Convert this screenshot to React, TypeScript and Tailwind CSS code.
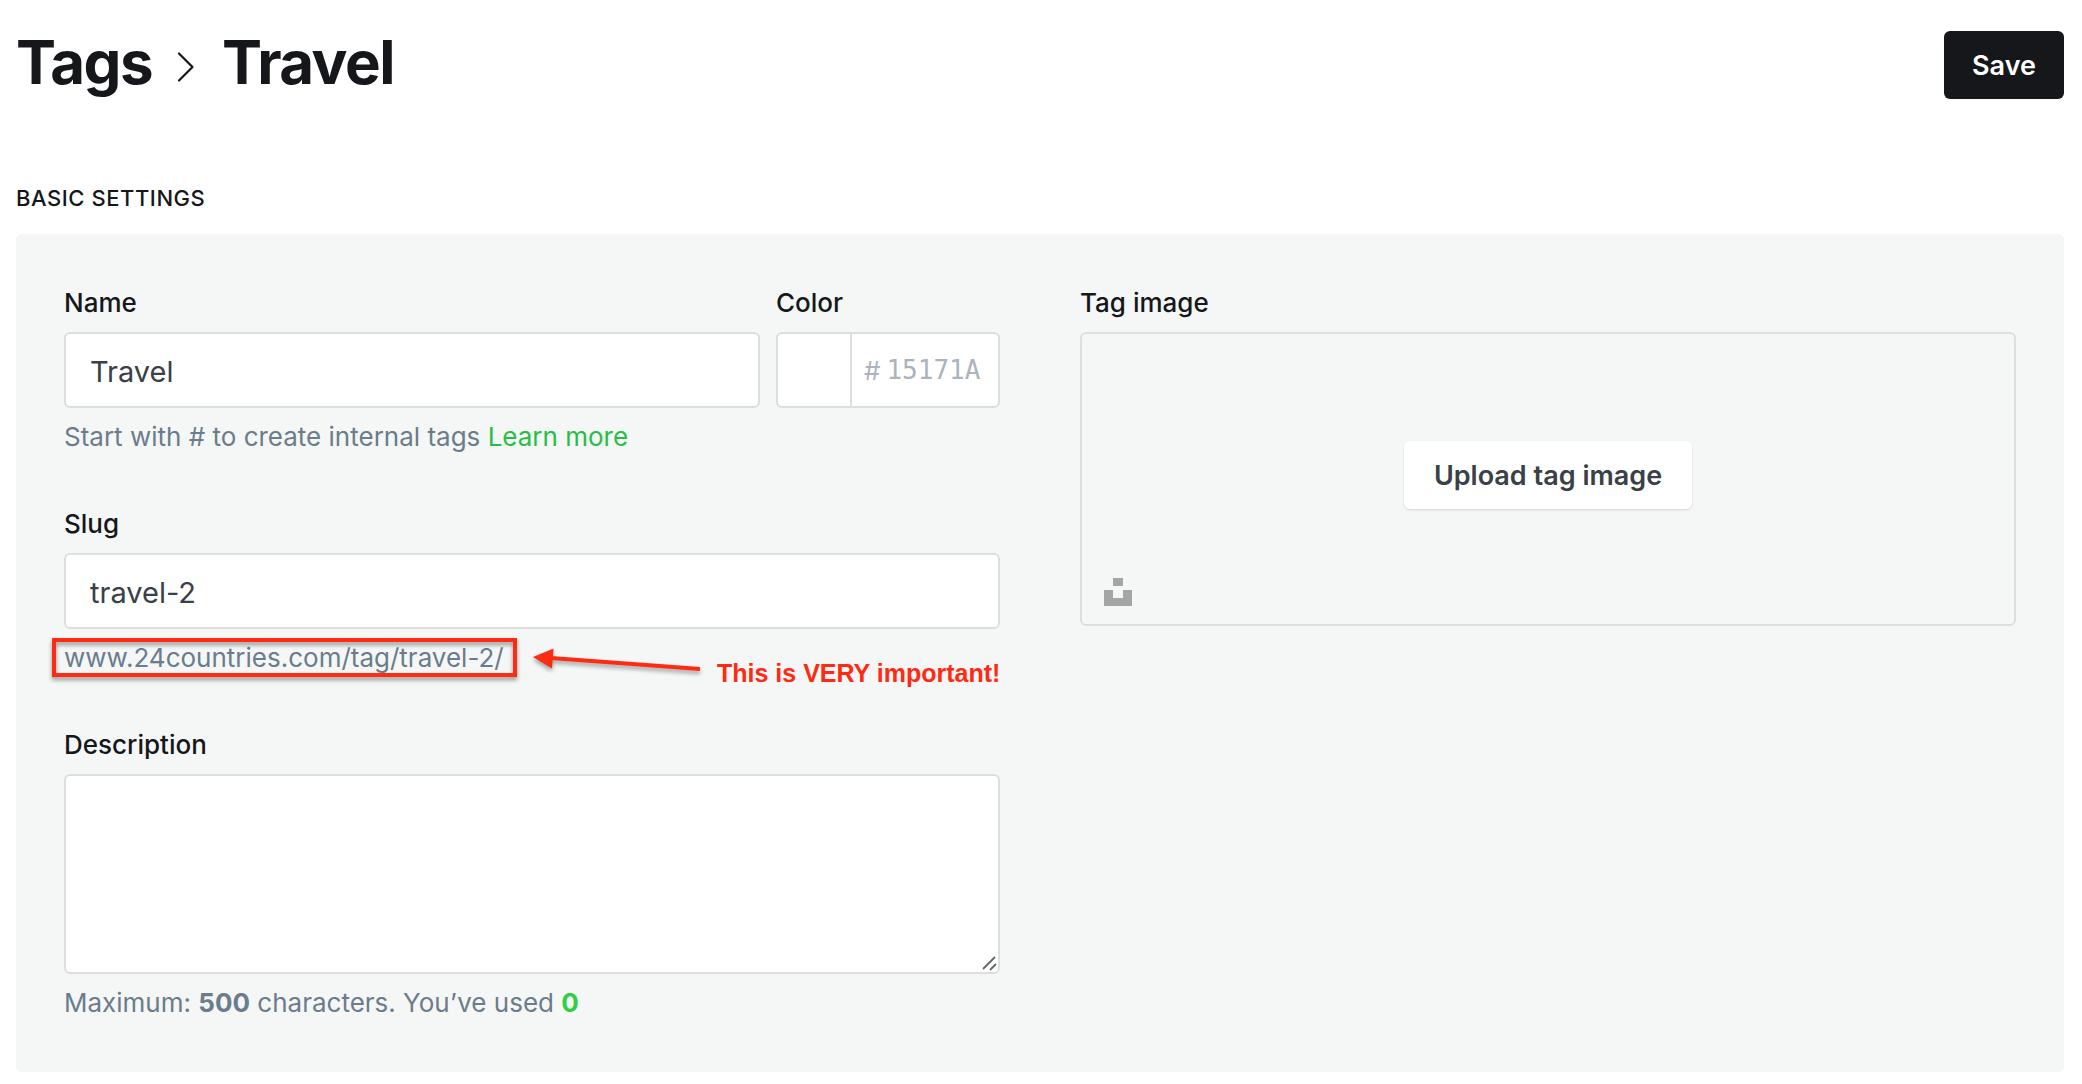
import React, { useState } from 'react';

const labelClass = 'block text-[26px] leading-[42px] font-medium text-[#15171a]';
const inputClass = 'block w-full h-[76px] rounded-md border-2 border-[#dddfde] bg-white px-6 pt-0.5 text-[29px] text-[#394047] outline-none';
const helpClass = 'mt-2 text-[26px] leading-[42px] text-[#6b7c8c]';

const Breadcrumb: React.FC<{ name: string }> = ({ name }) => (
    <h1 className="flex items-center text-[60px] leading-[74px] font-bold tracking-tight text-[#15171a]">
        <a href="#tags">Tags</a>
        <svg className="mt-2.5 mr-[27px] ml-[25px] h-8 w-[18px]" viewBox="0 0 18 32" fill="none" aria-hidden="true">
            <path d="M2 2.5 L15.5 16 L2 29.5" stroke="#15171a" strokeWidth="2.2" strokeLinecap="round" strokeLinejoin="round" />
        </svg>
        <span>{name}</span>
    </h1>
);

const UnsplashIcon: React.FC = () => (
    <svg className="h-7 w-7" viewBox="0 0 28 28" fill="#a4a6a5" aria-hidden="true">
        <path d="M9 0h10v8H9zM0 12h9v8h10v-8h9v16H0z" />
    </svg>
);

const SlugCallout: React.FC = () => (
    <div className="pointer-events-none absolute top-0 left-[-12px] flex w-[950px] items-start text-[#ff2a12]">
        <span className="mt-px h-[39px] w-[465px] shrink-0 border-4 border-[#ff2a12] drop-shadow-[0_3px_2px_rgba(0,0,0,0.4)]" />
        <svg className="mt-2 ml-4 h-8 w-[168px] shrink-0 drop-shadow-[0_3px_2px_rgba(0,0,0,0.35)]" viewBox="0 0 168 32" aria-hidden="true">
            <path d="M18 13 L167 24" stroke="#ff2a12" strokeWidth="4" fill="none" />
            <path d="M0 12 L20.5 3.5 L19 23.5 Z" fill="#ff2a12" />
        </svg>
        <strong className="mt-4 ml-4 font-['Liberation_Sans',sans-serif] text-[25px] leading-[40px] font-bold whitespace-nowrap">
            This is VERY important!
        </strong>
    </div>
);

export default function App() {
    const [name, setName] = useState('Travel');
    const [slug, setSlug] = useState('travel-2');
    const [color, setColor] = useState('');
    const [description, setDescription] = useState('');

    return (
        <div className="min-h-screen bg-white pt-[25px] pr-[18px] pb-3 pl-4 font-['Inter',sans-serif]">
            <header className="flex items-end justify-between">
                <Breadcrumb name="Travel" />
                <button type="button" className="h-[68px] rounded-md bg-[#15171a] px-7 pt-0.5 text-[27px] font-semibold text-white">
                    Save
                </button>
            </header>

            <h2 className="mt-[83px] text-[22px] leading-8 font-medium tracking-wide text-[#15171a] uppercase">Basic settings</h2>

            <section className="mt-5 grid grid-cols-2 gap-20 rounded-md bg-[#f4f7f6] p-12">
                <form className="flex flex-col gap-[45px]">
                    <div>
                        <div className="flex gap-4">
                            <div className="flex-1">
                                <label htmlFor="tag-name" className={labelClass}>Name</label>
                                <div className="mt-2">
                                    <input id="tag-name" className={inputClass} value={name} onChange={e => setName(e.target.value)} />
                                </div>
                            </div>
                            <div className="w-56">
                                <label htmlFor="tag-color" className={labelClass}>Color</label>
                                <div className="mt-2 flex h-[76px] overflow-hidden rounded-md border-2 border-[#dddfde] bg-white">
                                    <span className="w-[74px] shrink-0 border-r-2 border-[#dddfde]" />
                                    <div className="flex min-w-0 flex-1 items-center gap-1.5 pl-3 text-[26px] text-[#abb4be]">
                                        <span>#</span>
                                        <input
                                            id="tag-color"
                                            className="w-full min-w-0 bg-transparent font-['DejaVu_Sans_Mono',monospace] outline-none placeholder:text-[#abb4be]"
                                            placeholder="15171A"
                                            value={color}
                                            onChange={e => setColor(e.target.value)}
                                        />
                                    </div>
                                </div>
                            </div>
                        </div>
                        <p className={helpClass}>
                            Start with # to create internal tags <a href="#learn" className="text-[#26bf44]">Learn more</a>
                        </p>
                    </div>

                    <div>
                        <label htmlFor="tag-slug" className={labelClass}>Slug</label>
                        <div className="mt-2">
                            <input id="tag-slug" className={inputClass} value={slug} onChange={e => setSlug(e.target.value)} />
                        </div>
                        <div className="relative">
                            <p className={helpClass}>www.24countries.com/tag/{slug}/</p>
                            <SlugCallout />
                        </div>
                    </div>

                    <div>
                        <label htmlFor="tag-description" className={labelClass}>Description</label>
                        <div className="relative mt-2">
                            <textarea
                                id="tag-description"
                                className="block h-[200px] w-full resize-none rounded-md border-2 border-[#dddfde] bg-white px-6 py-4 text-[29px] text-[#394047] outline-none"
                                value={description}
                                onChange={e => setDescription(e.target.value)}
                            />
                            <svg className="pointer-events-none absolute right-[3px] bottom-[3px] h-4 w-4" viewBox="0 0 16 16" aria-hidden="true">
                                <path d="M2 14 L14 2 M9 15 L15 9" stroke="#666" strokeWidth="1.8" />
                            </svg>
                        </div>
                        <p className={helpClass}>
                            Maximum: <b>500</b> characters. You’ve used <b className="text-[#30cf43]">{description.length}</b>
                        </p>
                    </div>
                </form>

                <div>
                    <h3 className={labelClass}>Tag image</h3>
                    <div className="relative mt-2 flex h-[294px] items-center justify-center rounded-md border-2 border-[#dddfde] pb-2">
                        <button type="button" className="h-[68px] rounded-md bg-white px-[30px] pt-0.5 text-[27px] font-semibold text-[#394047] shadow-sm">
                            Upload tag image
                        </button>
                        <button type="button" aria-label="Unsplash" className="absolute bottom-[18px] left-[22px]">
                            <UnsplashIcon />
                        </button>
                    </div>
                </div>
            </section>
        </div>
    );
}
